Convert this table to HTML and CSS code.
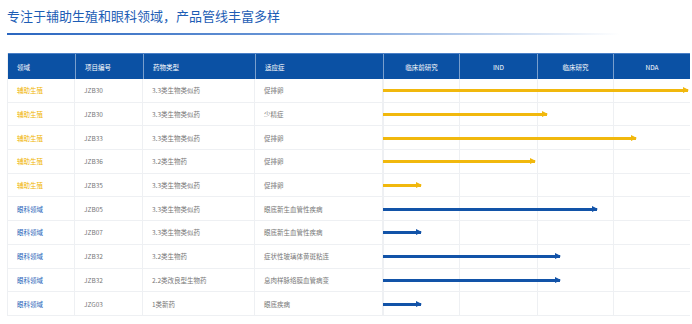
FILE: index.html
```html
<!DOCTYPE html>
<html lang="zh">
<head>
    <meta charset="UTF-8">
    <title>产品管线</title>
    <link rel="stylesheet" href="styles.css">
</head>
<body>
    <div class="page">
        <h1 class="title">专注于辅助生殖和眼科领域，产品管线丰富多样</h1>
        <div class="title-line"></div>

        <div class="pipeline">
            <div class="row head">
                <div class="cell">领域</div>
                <div class="cell">项目编号</div>
                <div class="cell">药物类型</div>
                <div class="cell">适应症</div>
                <div class="track">
                    <div class="stage">临床前研究</div>
                    <div class="stage">IND</div>
                    <div class="stage">临床研究</div>
                    <div class="stage">NDA</div>
                </div>
            </div>

            <div class="row">
                <div class="cell area repro">辅助生殖</div>
                <div class="cell">JZB30</div>
                <div class="cell">3.3类生物类似药</div>
                <div class="cell">促排卵</div>
                <div class="track"><div class="stage"></div><div class="stage"></div><div class="stage"></div><div class="stage"></div>
                    <div class="arrow repro" style="width: 305px"></div></div>
            </div>
            <div class="row">
                <div class="cell area repro">辅助生殖</div>
                <div class="cell">JZB30</div>
                <div class="cell">3.3类生物类似药</div>
                <div class="cell">少精症</div>
                <div class="track"><div class="stage"></div><div class="stage"></div><div class="stage"></div><div class="stage"></div>
                    <div class="arrow repro" style="width: 164px"></div></div>
            </div>
            <div class="row">
                <div class="cell area repro">辅助生殖</div>
                <div class="cell">JZB33</div>
                <div class="cell">3.3类生物类似药</div>
                <div class="cell">促排卵</div>
                <div class="track"><div class="stage"></div><div class="stage"></div><div class="stage"></div><div class="stage"></div>
                    <div class="arrow repro" style="width: 253px"></div></div>
            </div>
            <div class="row">
                <div class="cell area repro">辅助生殖</div>
                <div class="cell">JZB36</div>
                <div class="cell">3.2类生物药</div>
                <div class="cell">促排卵</div>
                <div class="track"><div class="stage"></div><div class="stage"></div><div class="stage"></div><div class="stage"></div>
                    <div class="arrow repro" style="width: 152px"></div></div>
            </div>
            <div class="row">
                <div class="cell area repro">辅助生殖</div>
                <div class="cell">JZB35</div>
                <div class="cell">3.3类生物类似药</div>
                <div class="cell">促排卵</div>
                <div class="track"><div class="stage"></div><div class="stage"></div><div class="stage"></div><div class="stage"></div>
                    <div class="arrow repro" style="width: 38px"></div></div>
            </div>
            <div class="row">
                <div class="cell area eye">眼科领域</div>
                <div class="cell">JZB05</div>
                <div class="cell">3.3类生物类似药</div>
                <div class="cell">眼底新生血管性疾病</div>
                <div class="track"><div class="stage"></div><div class="stage"></div><div class="stage"></div><div class="stage"></div>
                    <div class="arrow eye" style="width: 214px"></div></div>
            </div>
            <div class="row">
                <div class="cell area eye">眼科领域</div>
                <div class="cell">JZB07</div>
                <div class="cell">3.3类生物类似药</div>
                <div class="cell">眼底新生血管性疾病</div>
                <div class="track"><div class="stage"></div><div class="stage"></div><div class="stage"></div><div class="stage"></div>
                    <div class="arrow eye" style="width: 38px"></div></div>
            </div>
            <div class="row">
                <div class="cell area eye">眼科领域</div>
                <div class="cell">JZB32</div>
                <div class="cell">3.2类生物药</div>
                <div class="cell">症状性玻璃体黄斑粘连</div>
                <div class="track"><div class="stage"></div><div class="stage"></div><div class="stage"></div><div class="stage"></div>
                    <div class="arrow eye" style="width: 177px"></div></div>
            </div>
            <div class="row">
                <div class="cell area eye">眼科领域</div>
                <div class="cell">JZB32</div>
                <div class="cell">2.2类改良型生物药</div>
                <div class="cell">息肉样脉络膜血管病变</div>
                <div class="track"><div class="stage"></div><div class="stage"></div><div class="stage"></div><div class="stage"></div>
                    <div class="arrow eye" style="width: 177px"></div></div>
            </div>
            <div class="row">
                <div class="cell area eye">眼科领域</div>
                <div class="cell">JZG03</div>
                <div class="cell">1类新药</div>
                <div class="cell">眼底疾病</div>
                <div class="track"><div class="stage"></div><div class="stage"></div><div class="stage"></div><div class="stage"></div>
                    <div class="arrow eye" style="width: 38px"></div></div>
            </div>
        </div>
    </div>
</body>
</html>
```

FILE: styles.css
```css
body {
    margin: 0;
    background-color: white;
    font-family: "Noto Sans CJK SC", "Noto Sans", sans-serif;
}

.page {
    padding: 6px 2px 0 7px;
}

.title {
    margin: 0;
    font-size: 13px;
    line-height: 20px;
    font-weight: 400;
    color: #1d5db5;
}

.title-line {
    margin-top: 7px;
    width: 613px;
    height: 2px;
    background: linear-gradient(to right, #2a66c0 0%, #6f9ad8 50%, rgba(255, 255, 255, 0) 100%);
}

.pipeline {
    margin-top: 18px;
    width: 683px;
    border-left: 1px solid #eef0f3;
    box-sizing: border-box;
}

.row {
    display: grid;
    grid-template-columns: 67px 68px 112px 128px 307px;
    height: 23.7px;
    border-bottom: 1px solid #eef0f3;
    box-sizing: border-box;
}

.cell {
    display: flex;
    align-items: center;
    padding-left: 9px;
    font-size: 6.5px;
    color: #777;
    border-right: 1px solid #eef0f3;
    white-space: nowrap;
}

.area.repro {
    color: #f0b400;
}

.area.eye {
    color: #2160b8;
}

.track {
    display: grid;
    grid-template-columns: 76px 78px 76px 77px;
    position: relative;
}

.stage {
    display: flex;
    align-items: center;
    justify-content: center;
    font-size: 6.5px;
    border-left: 1px solid #eef0f3;
}

.head {
    height: 26px;
    background-color: #0b51a4;
    border-top: 1px solid #4a7fc6;
    border-bottom: none;
}

.head .cell,
.head .stage {
    color: white;
    border-color: rgba(255, 255, 255, 0.45);
}

.head .stage {
    border-left: 1px solid rgba(255, 255, 255, 0.45);
}

.head .cell {
    border-right: none;
    border-left: 1px solid rgba(255, 255, 255, 0.45);
}

.head .cell:first-child {
    border-left: none;
}

.arrow {
    position: absolute;
    left: 0;
    top: 50%;
    height: 3px;
    margin-top: -1px;
}

.arrow::after {
    content: "";
    position: absolute;
    right: -1px;
    top: -2px;
    border-top: 3.5px solid transparent;
    border-bottom: 3.5px solid transparent;
    border-left: 6px solid;
}

.arrow.repro {
    background-color: #f1b80d;
    color: #f1b80d;
}

.arrow.eye {
    background-color: #1253a8;
    color: #1253a8;
}
```
